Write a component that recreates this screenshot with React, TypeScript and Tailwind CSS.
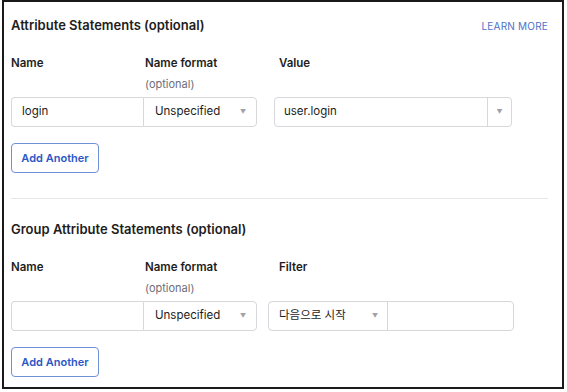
const FONT = { fontFamily: 'Inter, "Noto Sans", "Noto Sans CJK KR", sans-serif' };

function Caret() {
    return <span className="text-[6px] leading-none text-[#a0a0a8]">▼</span>;
}

function Labels({ third }: { third: string }) {
    return (
        <>
            <div className="mt-5 flex h-4 items-center text-[11.5px] font-semibold text-[#1d1d21]">
                <span className="w-[134px]">Name</span>
                <span className="w-[134px]">Name format</span>
                <span>{third}</span>
            </div>
            <div className="mt-1 flex h-4 items-center pl-[134px] text-[11px] text-[#6e6e78]">(optional)</div>
        </>
    );
}

function FormatSelect() {
    return (
        <div className="flex h-full w-[114px] items-center justify-between rounded-r-[4px] border border-[#d7d7dc] pl-[11px] pr-[10px]">
            <span>Unspecified</span>
            <Caret />
        </div>
    );
}

function AddButton() {
    return (
        <button className="mt-4 h-[30px] w-[88px] rounded-[4px] border border-[#6f8fd6] text-[11px] font-semibold text-[#2b57c6]">
            Add Another
        </button>
    );
}

export default function App() {
    return (
        <div style={FONT} className="bg-white">
            <div className="ml-[2px] h-[389px] w-[562px] border-2 border-[#1a1a1a] pl-[7px] pr-[14px] pt-[14px]">
                {/* Attribute Statements */}
                <div className="flex h-5 items-center justify-between">
                    <h2 className="text-[13px] font-semibold text-[#1d1d21]">Attribute Statements (optional)</h2>
                    <a className="text-[10px] tracking-[0.2px] text-[#4e72c9]">LEARN MORE</a>
                </div>
                <Labels third="Value" />
                <div className="mt-[5px] flex h-[30px] text-[11.5px] text-[#1d1d21]">
                    <div className="flex h-full w-[132px] items-center rounded-l-[4px] border border-r-0 border-[#d7d7dc] pl-[10px]">login</div>
                    <FormatSelect />
                    <div className="ml-[17px] flex h-full w-[238px] rounded-[4px] border border-[#d7d7dc]">
                        <div className="flex flex-1 items-center pl-[9px]">user.login</div>
                        <div className="flex w-[24px] items-center justify-center border-l border-[#d7d7dc]">
                            <Caret />
                        </div>
                    </div>
                </div>
                <AddButton />
                <div className="mt-[25px] h-px bg-[#e6e6ea]" />

                {/* Group Attribute Statements */}
                <div className="mt-[21px] flex h-5 items-center">
                    <h2 className="text-[13px] font-semibold text-[#1d1d21]">Group Attribute Statements (optional)</h2>
                </div>
                <Labels third="Filter" />
                <div className="mt-[5px] flex h-[30px] text-[11.5px] text-[#1d1d21]">
                    <div className="h-full w-[132px] rounded-l-[4px] border border-r-0 border-[#d7d7dc]" />
                    <FormatSelect />
                    <div className="ml-[11px] flex h-full w-[246px] rounded-[4px] border border-[#d7d7dc]">
                        <div className="flex w-[119px] items-center justify-between border-r border-[#d7d7dc] pl-[10px] pr-[9px]">
                            <span>다음으로 시작</span>
                            <Caret />
                        </div>
                        <div className="flex-1" />
                    </div>
                </div>
                <AddButton />
            </div>
        </div>
    );
}
